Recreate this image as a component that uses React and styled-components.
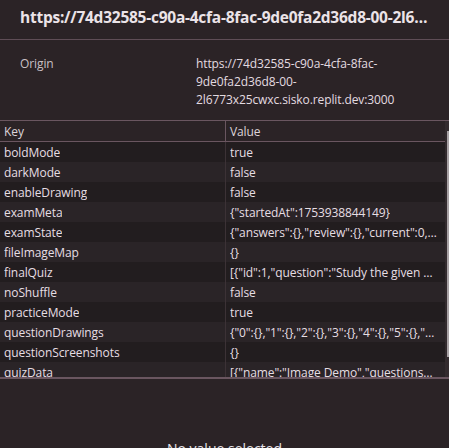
import React from "react";
import styled, { createGlobalStyle } from "styled-components";

const GlobalStyle = createGlobalStyle`
    html, body {
        margin: 0;
        padding: 0;
        background: #2b2326;
        overflow: hidden;
    }
    body {
        font-family: "Segoe UI", "Open Sans", "Noto Sans", sans-serif;
        color: #e3dbe0;
    }
`;

const Panel = styled.div`
    width: 449px;
    height: 448px;
    display: flex;
    flex-direction: column;
    background: #2b2326;
    overflow: hidden;

    & > * {
        flex-shrink: 0;
    }
`;

const Title = styled.div`
    height: 40px;
    box-sizing: border-box;
    padding: 6px 14px 0 20px;
    line-height: 22px;
    border-bottom: 1px solid #5f4d56;
    font-size: 15.5px;
    letter-spacing: -0.25px;
    font-weight: 700;
    color: #ebe3e8;
    white-space: nowrap;
    overflow: hidden;
    text-overflow: ellipsis;
`;

const OriginRow = styled.div`
    display: grid;
    grid-template-columns: 176px 1fr;
    height: 80px;
    padding: 15px 16px 0 20px;
    box-sizing: border-box;
    font-size: 12px;
    line-height: 18px;
    letter-spacing: -0.1px;
`;

const OriginLabel = styled.div`
    color: #c9c0c5;
`;

const OriginValue = styled.div`
    color: #e3dbe0;
    width: 210px;
`;

const TableWrap = styled.div`
    display: flex;
    height: 256px;
    border-top: 1px solid #6a5660;
    border-bottom: 2px solid #6a5660;
`;

const Table = styled.div`
    flex: 1;
    overflow: hidden;
    font-size: 12px;
    letter-spacing: -0.1px;
`;

const Row = styled.div`
    display: grid;
    grid-template-columns: 225px 1fr;
    height: 20px;
    background: ${p => (p.header ? "#2b2326" : p.odd ? "#221d1f" : "#2a2427")};
    border-bottom: ${p => (p.header ? "1px solid #6a5660" : "none")};
`;

const Cell = styled.div`
    padding: 0 8px 0 4px;
    display: flex;
    align-items: center;
    white-space: nowrap;
    overflow: hidden;
    border-left: ${p => (p.divider ? `1px solid ${p.header ? "#6a5660" : "#3c3236"}` : "none")};
    color: ${p => (p.header ? "#ddd4d9" : "#e6dee3")};

    span {
        overflow: hidden;
        text-overflow: ellipsis;
    }
`;

const Scrollbar = styled.div`
    width: 4px;
    background: #332b2e;
    display: flex;
    flex-direction: column;
    padding-top: 10px;
`;

const Thumb = styled.div`
    margin-left: 2px;
    width: 2px;
    height: 226px;
    background: #a8a2a5;
`;

const Empty = styled.div`
    display: flex;
    justify-content: center;
    padding-top: 60px;
    font-size: 14px;
    color: #e6e3ea;
`;

const items = [
    ["boldMode", "true"],
    ["darkMode", "false"],
    ["enableDrawing", "false"],
    ["examMeta", '{"startedAt":1753938844149}'],
    ["examState", '{"answers":{},"review":{},"current":0,"fifteenMinWarned":false}'],
    ["fileImageMap", "{}"],
    ["finalQuiz", '[{"id":1,"question":"Study the given Venn diagram"}]'],
    ["noShuffle", "false"],
    ["practiceMode", "true"],
    ["questionDrawings", '{"0":{},"1":{},"2":{},"3":{},"4":{},"5":{},"6":{},"7":{}}'],
    ["questionScreenshots", "{}"],
    ["quizData", '[{"name":"Image Demo","questions":[{"id":1}]}]']
];

const App = () => (
    <>
        <GlobalStyle />
        <Panel>
            <Title>https://74d32585-c90a-4cfa-8fac-9de0fa2d36d8-00-2l6773x25cwxc.sisko.replit.dev:3000</Title>
            <OriginRow>
                <OriginLabel>Origin</OriginLabel>
                <OriginValue>https://74d32585-c90a-4cfa-8fac-9de0fa2d36d8-00-2l6773x25cwxc.sisko.replit.dev:3000</OriginValue>
            </OriginRow>
            <TableWrap>
                <Table>
                    <Row header>
                        <Cell header>Key</Cell>
                        <Cell header divider>Value</Cell>
                    </Row>
                    {items.map(([key, value], index) => (
                        <Row key={key} odd={index % 2 === 0}>
                            <Cell>
                                <span>{key}</span>
                            </Cell>
                            <Cell divider>
                                <span>{value}</span>
                            </Cell>
                        </Row>
                    ))}
                </Table>
                <Scrollbar>
                    <Thumb />
                </Scrollbar>
            </TableWrap>
            <Empty>No value selected</Empty>
        </Panel>
    </>
);

export default App;
